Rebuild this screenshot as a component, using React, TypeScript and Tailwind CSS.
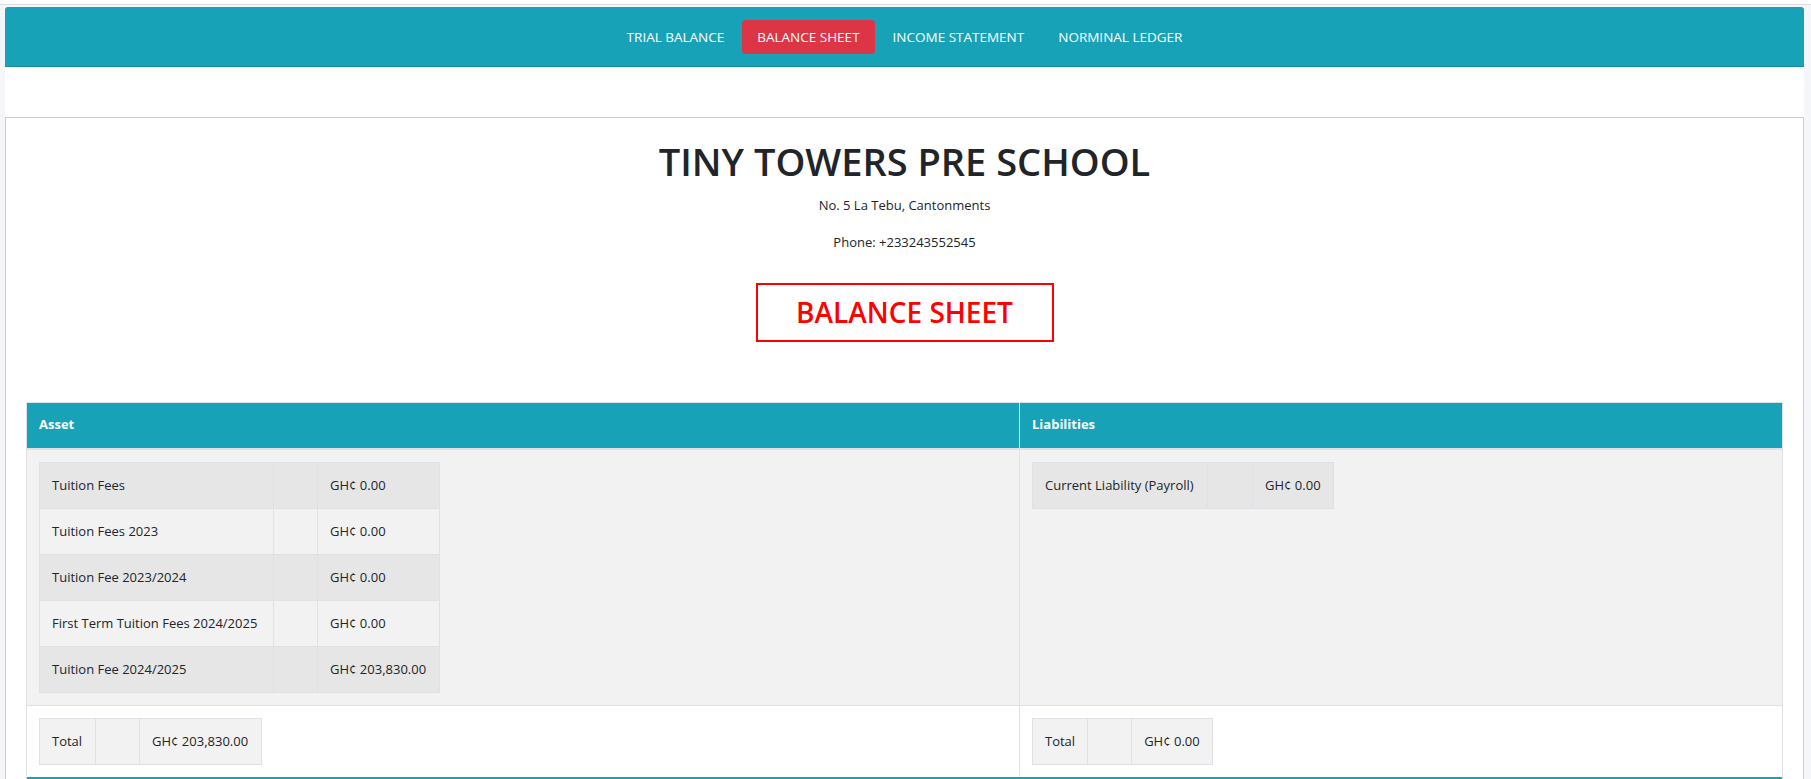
const assets = [
  { name: "Tuition Fees", amount: "GH¢ 0.00" },
  { name: "Tuition Fees 2023", amount: "GH¢ 0.00" },
  { name: "Tuition Fee 2023/2024", amount: "GH¢ 0.00" },
  { name: "First Term Tuition Fees 2024/2025", amount: "GH¢ 0.00" },
  { name: "Tuition Fee 2024/2025", amount: "GH¢ 203,830.00" },
];

const liabilities = [{ name: "Current Liability (Payroll)", amount: "GH¢ 0.00" }];

const tabs = ["TRIAL BALANCE", "BALANCE SHEET", "INCOME STATEMENT", "NORMINAL LEDGER"];

function LedgerTable({
  rows,
  widths,
  striped,
}: {
  rows: { name: string; amount: string }[];
  widths: [string, string, string];
  striped?: boolean;
}) {
  return (
    <table className="border-collapse">
      <tbody>
        {rows.map((row, i) => (
          <tr
            key={row.name}
            className={striped && i % 2 === 0 ? "bg-[#e6e6e6]" : "bg-[#f2f2f2]"}
          >
            <td className={`${widths[0]} whitespace-nowrap border border-[#dee2e6] px-[12px] py-[12px] leading-[21px]`}>
              {row.name}
            </td>
            <td className={`${widths[1]} border border-[#dee2e6] px-[12px] py-[12px] leading-[21px]`}></td>
            <td className={`${widths[2]} whitespace-nowrap border border-[#dee2e6] px-[12px] py-[12px] leading-[21px]`}>
              {row.amount}
            </td>
          </tr>
        ))}
      </tbody>
    </table>
  );
}

export default function App() {
  return (
    <div className="min-h-screen bg-[#f4f6f9] font-['Open_Sans',sans-serif] text-[14px] text-[#212529]">
      <div className="h-[5px] border-b border-[#dcdde1] bg-white" />
      <div className="ml-[5px] mr-[7px] mt-[2px] bg-white">
        <nav className="flex h-[60px] items-center justify-center rounded-t-[3px] border-b border-[#148c9f] bg-[#17a2b8] text-[13.5px] text-white">
          {tabs.map((tab) => (
            <a
              key={tab}
              href="#"
              className={
                tab === "BALANCE SHEET"
                  ? "mx-[1px] rounded-[4px] bg-[#dc3545] px-[15px] py-[7px] leading-[20px]"
                  : "px-[17px] py-[7px] leading-[20px]"
              }
            >
              {tab}
            </a>
          ))}
        </nav>

        <div className="h-[50px]" />

        <div className="border border-b-0 border-[#cccccc] px-[20px]">
          <div className="flex flex-col items-center pt-[21px]">
            <h1 className="mb-[10px] text-[38px] font-semibold leading-[1.2]">TINY TOWERS PRE SCHOOL</h1>
            <p className="mb-[16px] text-[13px] leading-[21px]">No. 5 La Tebu, Cantonments</p>
            <p className="mb-[16px] text-[13px] leading-[21px]">Phone: +233243552545</p>
            <div className="mt-[14px] flex h-[59px] w-[298px] items-center justify-center border-2 border-[#ff0000] text-[28px] font-semibold text-[#ff0000]">
              BALANCE SHEET
            </div>
          </div>

          <div className="mt-[60px] border-x border-t border-[#dee2e6] text-[13px]">
            <div className="grid grid-cols-[993px_1fr] border-b-2 border-[#dee2e6] bg-[#17a2b8] font-bold text-white">
              <div className="flex h-[45px] items-center border-r border-[#dee2e6] px-[12px]">Asset</div>
              <div className="flex h-[45px] items-center px-[12px]">Liabilities</div>
            </div>
            <div className="grid grid-cols-[993px_1fr] border-b border-[#dee2e6] bg-[#f2f2f2]">
              <div className="border-r border-[#dee2e6] p-[12px]">
                <LedgerTable rows={assets} widths={["w-[234px]", "w-[44px]", "w-[122px]"]} striped />
              </div>
              <div className="p-[12px]">
                <LedgerTable rows={liabilities} widths={["w-[175px]", "w-[45px]", "w-[81px]"]} striped />
              </div>
            </div>
            <div className="grid grid-cols-[993px_1fr] bg-white">
              <div className="border-r border-[#dee2e6] p-[12px]">
                <LedgerTable
                  rows={[{ name: "Total", amount: "GH¢ 203,830.00" }]}
                  widths={["w-[56px]", "w-[44px]", "w-[122px]"]}
                />
              </div>
              <div className="p-[12px]">
                <LedgerTable
                  rows={[{ name: "Total", amount: "GH¢ 0.00" }]}
                  widths={["w-[54px]", "w-[44px]", "w-[81px]"]}
                />
              </div>
            </div>
            <div className="h-[40px] border-t-2 border-[#17a2b8]" />
          </div>
        </div>
      </div>
    </div>
  );
}
